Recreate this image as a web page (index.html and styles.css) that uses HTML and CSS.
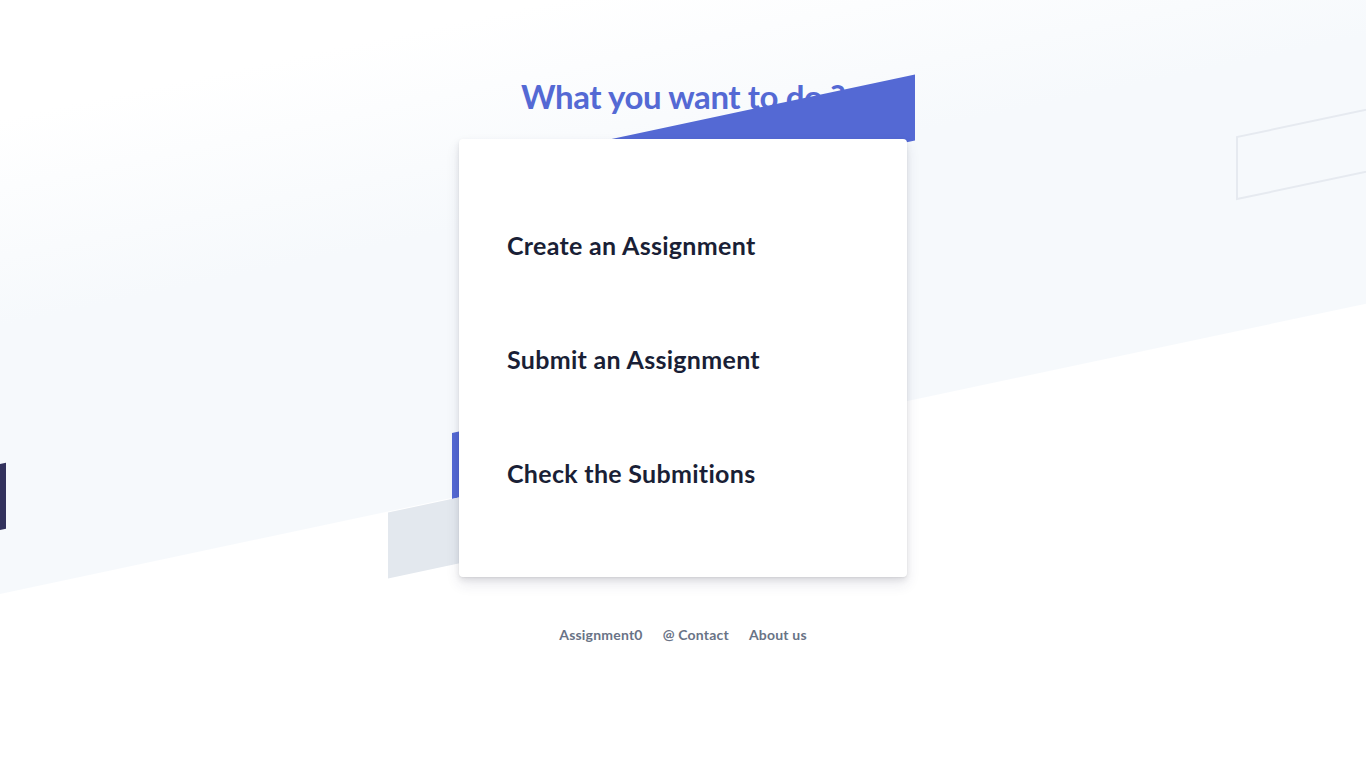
FILE: index.html
```html
<!DOCTYPE html>
<html lang="en">
<head>
<meta charset="utf-8">
<title>Assignment0</title>
<link rel="stylesheet" href="styles.css">
</head>
<body>
<div class="backdrop">
  <div class="band"></div>
</div>
<div class="stripes">
  <div class="stripes-grid">
    <span class="stripe stripe-blue-top"></span>
    <span class="stripe stripe-blue-left"></span>
    <span class="stripe stripe-gray"></span>
    <span class="stripe stripe-navy"></span>
    <span class="stripe stripe-outline"></span>
  </div>
</div>
<main class="page">
  <h1 class="title">What you want to do ?</h1>
  <section class="card">
    <a class="option" href="#">Create an Assignment</a>
    <a class="option" href="#">Submit an Assignment</a>
    <a class="option" href="#">Check the Submitions</a>
  </section>
  <footer class="footer">
    <a href="#">Assignment0</a>
    <a href="#">@ Contact</a>
    <a href="#">About us</a>
  </footer>
</main>
</body>
</html>
```

FILE: styles.css
```css
html, body {
  margin: 0;
  padding: 0;
  height: 100%;
  background: #ffffff;
  overflow: hidden;
}

body {
  font-family: Lato, "Open Sans", "Liberation Sans", sans-serif;
  position: relative;
}

.backdrop {
  position: absolute;
  inset: 0;
  z-index: 0;
  overflow: hidden;
}

.band {
  position: absolute;
  left: 0;
  top: 0;
  width: 100%;
  height: 594px;
  transform-origin: 0 0;
  transform: skewY(-12deg);
  background: linear-gradient(#ffffff 20%, #f6f9fc 55%);
}

.stripes {
  position: absolute;
  inset: 0;
  z-index: 2;
  overflow: hidden;
  pointer-events: none;
}

.stripes-grid {
  position: absolute;
  left: 0;
  top: 0;
  width: 100%;
  height: 700px;
  transform-origin: 0 0;
  transform: skewY(-12deg);
}

.stripe {
  position: absolute;
  display: block;
}

.stripe-blue-top {
  left: 560px;
  width: 355px;
  top: 269px;
  height: 66px;
  background: #5469d4;
}

.stripe-blue-left {
  left: 452px;
  width: 120px;
  top: 529px;
  height: 66px;
  background: #5469d4;
}

.stripe-gray {
  left: 388px;
  width: 160px;
  top: 595px;
  height: 66px;
  background: #e3e8ee;
}

.stripe-navy {
  left: -20px;
  width: 26px;
  top: 464px;
  height: 66px;
  background: #32325d;
}

.stripe-outline {
  left: 1236px;
  width: 300px;
  top: 399px;
  height: 64px;
  box-sizing: border-box;
  border: 2px solid #e6eaf0;
}

.page {
  position: relative;
  display: flex;
  flex-direction: column;
  align-items: center;
  padding-top: 76px;
}

.title {
  position: relative;
  z-index: 1;
  margin: 0 0 23px;
  font-size: 33px;
  line-height: 40px;
  font-weight: 700;
  color: #5469d4;
  letter-spacing: -0.4px;
}

.card {
  position: relative;
  z-index: 3;
  box-sizing: border-box;
  width: 448px;
  padding: 49px 48px 47px;
  background: #ffffff;
  border-radius: 4px;
  box-shadow: 0 7px 14px 0 rgba(50, 50, 93, 0.11), 0 3px 6px 0 rgba(0, 0, 0, 0.08), 0 1px 2px rgba(0, 0, 0, 0.06);
  display: flex;
  flex-direction: column;
}

.option {
  display: flex;
  align-items: center;
  height: 114px;
  font-size: 25px;
  font-weight: 700;
  letter-spacing: 0.3px;
  color: #1a1f36;
  text-decoration: none;
}

.footer {
  position: relative;
  z-index: 3;
  display: flex;
  gap: 20px;
  margin-top: 48px;
}

.footer a {
  font-size: 14px;
  line-height: 20px;
  font-weight: 700;
  letter-spacing: 0.2px;
  color: #697386;
  text-decoration: none;
}
```
